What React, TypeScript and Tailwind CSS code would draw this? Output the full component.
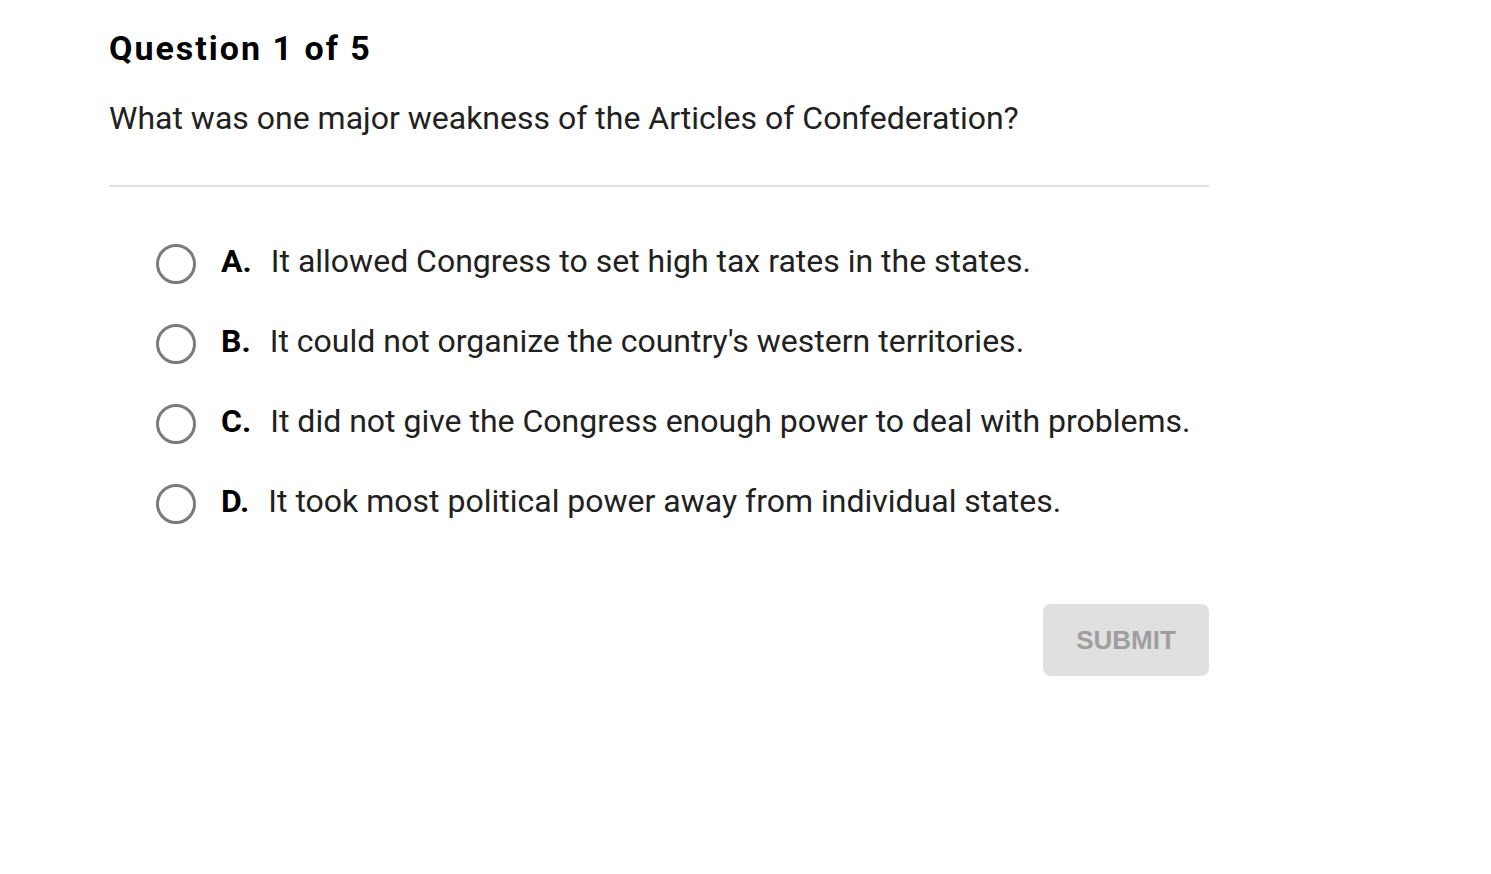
const options = [
  { letter: "A.", text: "It allowed Congress to set high tax rates in the states." },
  { letter: "B.", text: "It could not organize the country's western territories." },
  { letter: "C.", text: "It did not give the Congress enough power to deal with problems." },
  { letter: "D.", text: "It took most political power away from individual states." },
];

export default function App() {
  return (
    <div className="min-h-screen bg-white font-['Roboto',sans-serif] text-[#212121]">
      <div className="w-[1100px] ml-[109px] pt-[26px]">
        <h1 className="text-[34px] font-bold leading-[44px] tracking-[2px] text-black">
          Question 1 of 5
        </h1>
        <p className="mt-[26px] text-[32px] leading-[44px]">
          What was one major weakness of the Articles of Confederation?
        </p>
        <div className="mt-[45px] h-[2px] bg-[#e0e0e0]" />

        <div className="mt-[52px] pl-[47px] flex flex-col gap-[36px]">
          {options.map((o) => (
            <label key={o.letter} className="flex items-center h-[44px] cursor-pointer">
              <span className="w-[40px] h-[40px] mt-[6px] rounded-full border-[3px] border-[#7a7a7a] shrink-0" />
              <span className="ml-[25px] text-[32px] font-bold text-black">{o.letter}</span>
              <span className="ml-[19px] text-[32px]">{o.text}</span>
            </label>
          ))}
        </div>

        <div className="flex justify-end mt-[81px]">
          <button className="w-[166px] h-[72px] rounded-[8px] bg-[#e0e0e0] text-[#9e9e9e] font-['Liberation_Sans',sans-serif] font-bold text-[26px]">
            SUBMIT
          </button>
        </div>
      </div>
    </div>
  );
}
